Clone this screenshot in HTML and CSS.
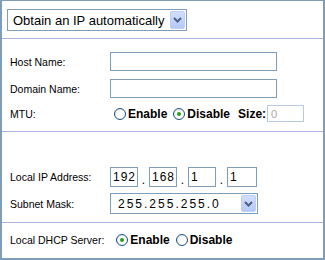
FILE: index.html
```html
<!DOCTYPE html>
<html lang="en">
<head>
  <meta charset="UTF-8">
  <title>LAN Setup</title>
  <link rel="stylesheet" href="styles.css">
</head>
<body>
  <div class="panel">
    <!-- connection type -->
    <div class="section top">
      <div class="combo wide">
        <span class="combo-text">Obtain an IP automatically</span>
        <span class="combo-btn"><svg width="9" height="6" viewBox="0 0 9 6"><path d="M1 1 L4.5 4.5 L8 1" fill="none" stroke="#4d6185" stroke-width="2"/></svg></span>
      </div>
    </div>

    <div class="section host">
      <div class="row">
        <label class="label">Host Name:</label>
        <input class="field long" type="text">
      </div>
      <div class="row">
        <label class="label">Domain Name:</label>
        <input class="field long" type="text">
      </div>
      <div class="row mtu">
        <label class="label">MTU:</label>
        <input class="radio first" type="radio" name="mtu"><b class="opt">Enable</b>
        <input class="radio" type="radio" name="mtu" checked><b class="opt">Disable</b>
        <b class="opt size">Size:</b><input class="field small" type="text" value="0" disabled>
      </div>
    </div>

    <div class="section lan">
      <div class="row">
        <label class="label">Local IP Address:</label>
        <div class="ip">
          <input class="field oct" type="text" value="192"><span class="dot">.</span>
          <input class="field oct" type="text" value="168"><span class="dot">.</span>
          <input class="field oct" type="text" value="1"><span class="dot">.</span>
          <input class="field oct last" type="text" value="1">
        </div>
      </div>
      <div class="row">
        <label class="label">Subnet Mask:</label>
        <div class="combo mask">
          <span class="combo-text ipnum">255.255.255.0</span>
          <span class="combo-btn"><svg width="9" height="6" viewBox="0 0 9 6"><path d="M1 1 L4.5 4.5 L8 1" fill="none" stroke="#4d6185" stroke-width="2"/></svg></span>
        </div>
      </div>
    </div>

    <div class="section dhcp">
      <div class="row">
        <label class="label-inline">Local DHCP Server:</label>
        <input class="radio dhcp-on" type="radio" name="dhcp" checked><b class="opt">Enable</b>
        <input class="radio" type="radio" name="dhcp"><b class="opt">Disable</b>
      </div>
    </div>
  </div>
</body>
</html>
```

FILE: styles.css
```css
body {
  margin: 0;
  font-family: "Liberation Sans", Arial, sans-serif;
  font-size: 10.5px;
  color: #000;
  background: #fff;
}
.panel {
  width: 325px;
  height: 260px;
  box-sizing: border-box;
  border: 2px solid #7f9db9;
  border-top-width: 1px;
  display: flex;
  flex-direction: column;
}
.section {
  border-bottom: 1px solid #a9b5dc;
}
.section.top {
  height: 39px;
  box-sizing: border-box;
  padding: 8px 0 0 5px;
}
.section.host {
  height: 94px;
  box-sizing: border-box;
  padding: 13px 0 0 8px;
}
.section.lan {
  height: 92px;
  box-sizing: border-box;
  padding: 35px 0 0 8px;
}
.section.dhcp {
  border-bottom: none;
  flex: 1;
  padding: 8px 0 0 8px;
}
.row {
  display: flex;
  align-items: center;
  height: 19px;
  margin-bottom: 8px;
}
.host .row.mtu {
  height: 17px;
  margin-top: -1px;
}
.lan .row {
  height: 20px;
  margin-bottom: 6px;
}
.lan .row + .row {
  height: 21px;
}
.label {
  width: 100px;
  flex: none;
}
.label-inline {
  margin-right: 6px;
}

/* text boxes */
.field {
  box-sizing: border-box;
  border: 1px solid #7f9db9;
  margin: 0;
  padding: 0 2px;
  font-family: "Liberation Sans", Arial, sans-serif;
  background: #fff;
  outline: none;
}
.field.long {
  width: 167px;
  height: 19px;
}
.field.small {
  width: 37px;
  height: 17px;
  font-size: 11px;
  border-color: #b8c8e0;
  color: #aca899;
  padding-left: 3px;
}
.ip {
  display: flex;
  align-items: flex-end;
}
.field.oct {
  width: 28px;
  height: 20px;
  font-size: 12px;
  letter-spacing: 1px;
  padding: 0 0 0 2px;
}
.field.oct.last {
  width: 30px;
}
.dot {
  width: 11px;
  text-align: center;
  font-size: 12px;
  line-height: 14px;
}

/* drop-down boxes */
.combo {
  box-sizing: border-box;
  border: 1px solid #7f9db9;
  display: flex;
  align-items: center;
  justify-content: space-between;
  padding: 1px;
  background: #fff;
}
.combo.wide {
  width: 180px;
  height: 22px;
}
.combo.mask {
  width: 148px;
  height: 21px;
}
.combo-text {
  font-size: 13px;
  padding-left: 4px;
}
.combo-text.ipnum {
  font-size: 12px;
  letter-spacing: 2px;
  padding-left: 6px;
}
.combo-btn {
  width: 15px;
  height: 100%;
  box-sizing: border-box;
  border: 1px solid #bccdf7;
  border-radius: 2px;
  background: linear-gradient(#d2defc, #b5c9f6);
  display: flex;
  align-items: center;
  justify-content: center;
}

/* radio buttons */
.radio {
  appearance: none;
  -webkit-appearance: none;
  width: 12px;
  height: 12px;
  margin: 0 2px 0 6px;
  border: 1px solid #1c5180;
  border-radius: 50%;
  background: radial-gradient(circle at 60% 60%, #ffffff 30%, #dcdcd6 100%);
  box-sizing: border-box;
  position: relative;
}
.radio.first {
  margin-left: 4px;
}
.radio.dhcp-on {
  margin-left: 6px;
}
.radio:checked::after {
  content: "";
  position: absolute;
  left: 3px;
  top: 3px;
  width: 4px;
  height: 4px;
  border-radius: 50%;
  background: #21a121;
}
.opt {
  font-size: 12px;
  font-weight: bold;
}
.opt.size {
  margin-left: 8px;
  margin-right: 1px;
}
```
